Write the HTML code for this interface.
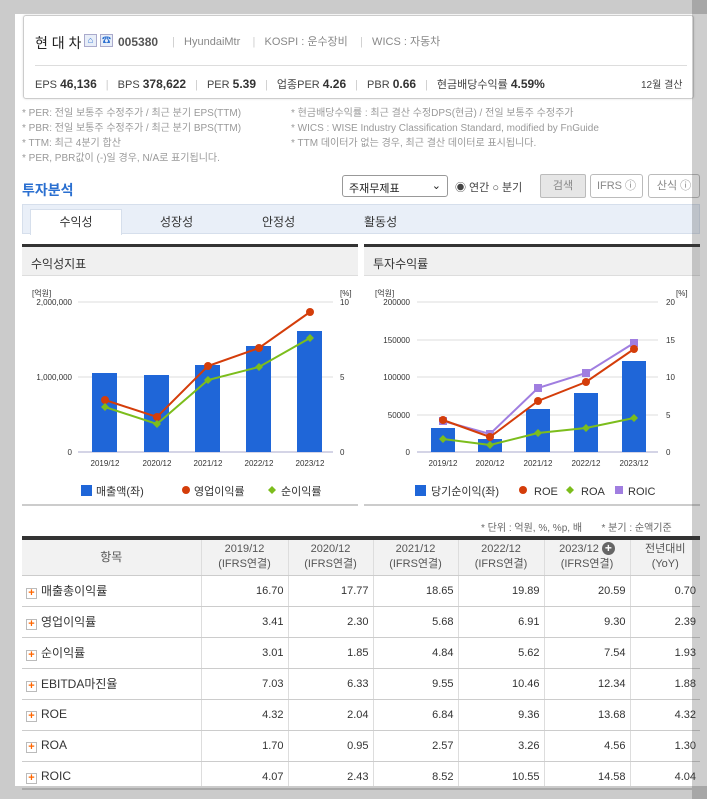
<!DOCTYPE html>
<html><head><meta charset="utf-8"><style>
*{margin:0;padding:0;box-sizing:border-box}
body{width:707px;height:799px;overflow:hidden;background:#fff;font-family:"Liberation Sans","Noto Sans CJK KR",sans-serif;font-size:11px;color:#333;position:relative}
.a{position:absolute;white-space:nowrap}
.g{color:#888}
b{font-weight:bold;color:#333}
.sep{color:#ccc;margin:0 9px}
table{border-collapse:collapse;position:absolute;left:22px;top:538px;width:678px;table-layout:fixed}
th{background:#f2f2f2;font-weight:normal;color:#555;border-left:1px solid #ddd;border-bottom:1px solid #ccc;height:36px;font-size:11px;line-height:15px}
th:first-child{border-left:none;font-size:12px}
td{border-left:1px solid #ddd;border-bottom:1px solid #ccc;height:31px;text-align:right;padding-right:4px;font-size:11px;color:#333}
td:first-child{border-left:none;text-align:left;padding-left:4px;font-size:12px}
.pl{display:inline-block;width:11px;height:11px;border:1px solid #bbb;background:#fff;color:#f60;font-size:11px;line-height:9px;text-align:center;font-weight:bold;margin-right:4px;vertical-align:-1px}
</style></head><body>
<div class="a" style="left:0;top:0;width:707px;height:14px;background:#cbcbcb"></div>
<div class="a" style="left:0;top:0;width:15px;height:799px;background:#cbcbcb"></div>
<div class="a" style="left:0;top:786px;width:707px;height:13px;background:#cbcbcb"></div>

<div class="a" style="left:23px;top:15px;width:671px;height:84px;border:1px solid #ccc;border-radius:3px;box-shadow:0 0 2px #ddd"></div>
<div class="a" style="left:35px;top:33px;font-size:14px;color:#222">현 대 차</div>
<div class="a" style="left:84px;top:34px;width:13px;height:13px;border:1px solid #aac;background:#e8eef8;color:#2a6fd0;font-size:9px;text-align:center;line-height:11px">⌂</div>
<div class="a" style="left:100px;top:34px;width:13px;height:13px;border:1px solid #aac;background:#e8eef8;color:#2a6fd0;font-size:9px;text-align:center;line-height:11px">☎</div>
<div class="a" style="left:118px;top:35px;font-size:12px;font-weight:bold;color:#555">005380</div>
<div class="a g" style="left:172px;top:33px;font-size:11px"><span style="color:#ccc">|</span>&nbsp;&nbsp; HyundaiMtr&nbsp;&nbsp;&nbsp; <span style="color:#ccc">|</span>&nbsp;&nbsp; KOSPI : 운수장비&nbsp;&nbsp;&nbsp; <span style="color:#ccc">|</span>&nbsp;&nbsp; WICS : 자동차</div>
<div class="a" style="left:35px;top:65px;width:652px;height:1px;background:#ddd"></div>
<div class="a" style="left:35px;top:76px;font-size:11px;color:#444">EPS <b style="font-size:12px">46,136</b><span class="sep">|</span>BPS <b style="font-size:12px">378,622</b><span class="sep">|</span>PER <b style="font-size:12px">5.39</b><span class="sep">|</span>업종PER <b style="font-size:12px">4.26</b><span class="sep">|</span>PBR <b style="font-size:12px">0.66</b><span class="sep">|</span>현금배당수익률 <b style="font-size:12px">4.59%</b></div>
<div class="a" style="left:641px;top:76px;font-size:10px;color:#444">12월 결산</div>

<div class="a g" style="left:22px;top:106px;font-size:10px;line-height:15px;color:#999">* PER: 전일 보통주 수정주가 / 최근 분기 EPS(TTM)<br>* PBR: 전일 보통주 수정주가 / 최근 분기 BPS(TTM)<br>* TTM: 최근 4분기 합산<br>* PER, PBR값이 (-)일 경우, N/A로 표기됩니다.</div>
<div class="a g" style="left:291px;top:106px;font-size:10px;line-height:15px;color:#999">* 현금배당수익률 : 최근 결산 수정DPS(현금) / 전일 보통주 수정주가<br>* WICS : WISE Industry Classification Standard, modified by FnGuide<br>* TTM 데이터가 없는 경우, 최근 결산 데이터로 표시됩니다.</div>

<div class="a" style="left:22px;top:180px;font-size:14px;font-weight:bold;color:#2a6fd0">투자분석</div>
<div class="a" style="left:342px;top:175px;width:106px;height:22px;border:1px solid #999;border-radius:3px;font-size:11px;padding:4px 6px;color:#222">주재무제표<span style="position:absolute;right:6px;top:3px">⌄</span></div>
<div class="a" style="left:455px;top:179px;font-size:11px;color:#444">◉ 연간 ○ 분기</div>
<div class="a" style="left:540px;top:174px;width:46px;height:24px;border:1px solid #bbb;background:#e6e6e6;border-radius:2px;text-align:center;line-height:22px;color:#888">검색</div>
<div class="a" style="left:590px;top:174px;width:53px;height:24px;border:1px solid #bbb;border-radius:3px;text-align:center;line-height:22px;color:#888">IFRS ⓘ</div>
<div class="a" style="left:648px;top:174px;width:52px;height:24px;border:1px solid #bbb;border-radius:3px;text-align:center;line-height:22px;color:#888">산식 ⓘ</div>

<div class="a" style="left:22px;top:204px;width:678px;height:30px;background:#e9eff8;border:1px solid #d6dfec"></div>
<div class="a" style="left:30px;top:209px;width:92px;height:26px;background:#fff;border:1px solid #d6dfec;border-bottom:none;text-align:center;line-height:24px;font-size:12px">수익성</div>
<div class="a" style="left:160px;top:213px;font-size:12px">성장성</div>
<div class="a" style="left:262px;top:213px;font-size:12px">안정성</div>
<div class="a" style="left:364px;top:213px;font-size:12px">활동성</div>

<div class="a" style="left:22px;top:244px;width:336px;height:32px;background:#f0f0f0;border-top:3px solid #333;border-bottom:1px solid #ddd;font-size:12px;padding:8px 9px">수익성지표</div>
<div class="a" style="left:364px;top:244px;width:336px;height:32px;background:#f0f0f0;border-top:3px solid #333;border-bottom:1px solid #ddd;font-size:12px;padding:8px 9px">투자수익률</div>

<svg class="a" style="left:22px;top:280px" width="336" height="225" font-family="Liberation Sans, Noto Sans CJK KR, sans-serif" font-size="8" fill="#333">
<text x="10" y="16">[억원]</text><text x="318" y="16">[%]</text>
<line x1="56" y1="22" x2="311" y2="22" stroke="#ddd"/><line x1="56" y1="97" x2="311" y2="97" stroke="#ddd"/>
<line x1="56" y1="172" x2="311" y2="172" stroke="#aac"/>
<text x="50" y="25" text-anchor="end">2,000,000</text><text x="50" y="100" text-anchor="end">1,000,000</text><text x="50" y="175" text-anchor="end">0</text>
<text x="318" y="25">10</text><text x="318" y="100">5</text><text x="318" y="175">0</text>
<g fill="#1f66d8"><rect x="70" y="93" width="25" height="79"/><rect x="122" y="95" width="25" height="77"/><rect x="173" y="85" width="25" height="87"/><rect x="224" y="66" width="25" height="106"/><rect x="275" y="51" width="25" height="121"/></g>
<polyline points="83,120 135,137 186,86 237,68 288,32" fill="none" stroke="#d43d0a" stroke-width="2"/>
<g fill="#d43d0a"><circle cx="83" cy="120" r="4"/><circle cx="135" cy="137" r="4"/><circle cx="186" cy="86" r="4"/><circle cx="237" cy="68" r="4"/><circle cx="288" cy="32" r="4"/></g>
<polyline points="83,127 135,144 186,100 237,87 288,58" fill="none" stroke="#7cbd1c" stroke-width="2"/>
<g fill="#7cbd1c"><path d="M83 123l4 4-4 4-4-4z"/><path d="M135 140l4 4-4 4-4-4z"/><path d="M186 96l4 4-4 4-4-4z"/><path d="M237 83l4 4-4 4-4-4z"/><path d="M288 54l4 4-4 4-4-4z"/></g>
<g text-anchor="middle"><text x="83" y="186">2019/12</text><text x="135" y="186">2020/12</text><text x="186" y="186">2021/12</text><text x="237" y="186">2022/12</text><text x="288" y="186">2023/12</text></g>
<g font-size="11"><rect x="59" y="205" width="11" height="11" fill="#1f66d8"/><text x="74" y="215">매출액(좌)</text>
<circle cx="164" cy="210" r="4" fill="#d43d0a"/><text x="172" y="215">영업이익률</text>
<path d="M250 206l4 4-4 4-4-4z" fill="#7cbd1c"/><text x="259" y="215">순이익률</text></g>
</svg>

<svg class="a" style="left:364px;top:280px" width="336" height="225" font-family="Liberation Sans, Noto Sans CJK KR, sans-serif" font-size="8" fill="#333">
<text x="11" y="16">[억원]</text><text x="312" y="16">[%]</text>
<g stroke="#ddd"><line x1="53" y1="22" x2="294" y2="22"/><line x1="53" y1="60" x2="294" y2="60"/><line x1="53" y1="97" x2="294" y2="97"/><line x1="53" y1="135" x2="294" y2="135"/></g>
<line x1="53" y1="172" x2="294" y2="172" stroke="#aac"/>
<g text-anchor="end"><text x="46" y="25">200000</text><text x="46" y="63">150000</text><text x="46" y="100">100000</text><text x="46" y="138">50000</text><text x="46" y="175">0</text></g>
<text x="302" y="25">20</text><text x="302" y="63">15</text><text x="302" y="100">10</text><text x="302" y="138">5</text><text x="302" y="175">0</text>
<g fill="#1f66d8"><rect x="67" y="148" width="24" height="24"/><rect x="114" y="159" width="24" height="13"/><rect x="162" y="129" width="24" height="43"/><rect x="210" y="113" width="24" height="59"/><rect x="258" y="81" width="24" height="91"/></g>
<polyline points="79,141 126,154 174,108 222,93 270,63" fill="none" stroke="#a07ee0" stroke-width="2"/>
<g fill="#a07ee0"><rect x="75" y="137" width="8" height="8"/><rect x="122" y="150" width="8" height="8"/><rect x="170" y="104" width="8" height="8"/><rect x="218" y="89" width="8" height="8"/><rect x="266" y="59" width="8" height="8"/></g>
<polyline points="79,140 126,157 174,121 222,102 270,69" fill="none" stroke="#d43d0a" stroke-width="2"/>
<g fill="#d43d0a"><circle cx="79" cy="140" r="4"/><circle cx="126" cy="157" r="4"/><circle cx="174" cy="121" r="4"/><circle cx="222" cy="102" r="4"/><circle cx="270" cy="69" r="4"/></g>
<polyline points="79,159 126,165 174,153 222,148 270,138" fill="none" stroke="#7cbd1c" stroke-width="2"/>
<g fill="#7cbd1c"><path d="M79 155l4 4-4 4-4-4z"/><path d="M126 161l4 4-4 4-4-4z"/><path d="M174 149l4 4-4 4-4-4z"/><path d="M222 144l4 4-4 4-4-4z"/><path d="M270 134l4 4-4 4-4-4z"/></g>
<g text-anchor="middle"><text x="79" y="186">2019/12</text><text x="126" y="186">2020/12</text><text x="174" y="186">2021/12</text><text x="222" y="186">2022/12</text><text x="270" y="186">2023/12</text></g>
<g font-size="11"><rect x="51" y="205" width="11" height="11" fill="#1f66d8"/><text x="67" y="215">당기순이익(좌)</text>
<circle cx="159" cy="210" r="4" fill="#d43d0a"/><text x="170" y="215">ROE</text>
<path d="M206 206l4 4-4 4-4-4z" fill="#7cbd1c"/><text x="217" y="215">ROA</text>
<rect x="251" y="206" width="8" height="8" fill="#a07ee0"/><text x="264" y="215">ROIC</text></g>
</svg>
<div class="a" style="left:22px;top:504px;width:336px;height:2px;background:#ccc"></div>
<div class="a" style="left:364px;top:504px;width:336px;height:2px;background:#ccc"></div>

<div class="a" style="left:481px;top:519px;font-size:10px;color:#666">* 단위 : 억원, %, %p, 배&nbsp;&nbsp;&nbsp;&nbsp;&nbsp;&nbsp;&nbsp;* 분기 : 순액기준</div>
<div class="a" style="left:22px;top:536px;width:678px;height:3px;background:#333"></div>
<table>
<colgroup><col style="width:179px"><col style="width:87px"><col style="width:85px"><col style="width:85px"><col style="width:86px"><col style="width:86px"><col style="width:70px"></colgroup>
<tr><th style="height:36px;border-top:2px solid #333">항목</th><th style="border-top:2px solid #333">2019/12<br>(IFRS연결)</th><th style="border-top:2px solid #333">2020/12<br>(IFRS연결)</th><th style="border-top:2px solid #333">2021/12<br>(IFRS연결)</th><th style="border-top:2px solid #333">2022/12<br>(IFRS연결)</th><th style="border-top:2px solid #333">2023/12 <span style="display:inline-block;width:13px;height:13px;border-radius:50%;background:#666;color:#fff;font-weight:bold;line-height:13px;font-size:12px">+</span><br>(IFRS연결)</th><th style="border-top:2px solid #333">전년대비<br>(YoY)</th></tr>
<tr><td><span class="pl">+</span>매출총이익률</td><td>16.70</td><td>17.77</td><td>18.65</td><td>19.89</td><td>20.59</td><td>0.70</td></tr>
<tr><td><span class="pl">+</span>영업이익률</td><td>3.41</td><td>2.30</td><td>5.68</td><td>6.91</td><td>9.30</td><td>2.39</td></tr>
<tr><td><span class="pl">+</span>순이익률</td><td>3.01</td><td>1.85</td><td>4.84</td><td>5.62</td><td>7.54</td><td>1.93</td></tr>
<tr><td><span class="pl">+</span>EBITDA마진율</td><td>7.03</td><td>6.33</td><td>9.55</td><td>10.46</td><td>12.34</td><td>1.88</td></tr>
<tr><td><span class="pl">+</span>ROE</td><td>4.32</td><td>2.04</td><td>6.84</td><td>9.36</td><td>13.68</td><td>4.32</td></tr>
<tr><td><span class="pl">+</span>ROA</td><td>1.70</td><td>0.95</td><td>2.57</td><td>3.26</td><td>4.56</td><td>1.30</td></tr>
<tr><td><span class="pl">+</span>ROIC</td><td>4.07</td><td>2.43</td><td>8.52</td><td>10.55</td><td>14.58</td><td>4.04</td></tr>
</table>
<div class="a" style="left:0;top:786px;width:707px;height:13px;background:#cbcbcb"></div>
<div class="a" style="left:22px;top:788px;width:670px;height:2px;background:#aaa"></div>
<div class="a" style="left:692px;top:0;width:15px;height:799px;background:rgba(60,60,60,0.25)"></div>
</body></html>
